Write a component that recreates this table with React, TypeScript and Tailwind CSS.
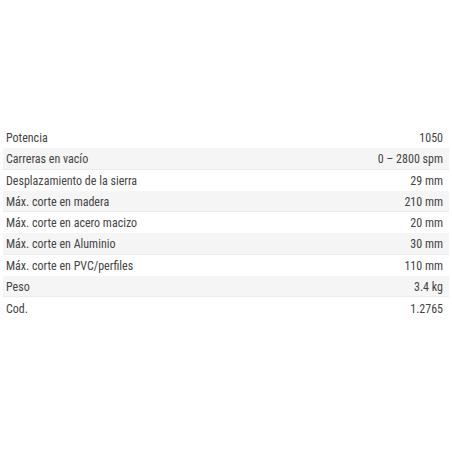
const specs: [string, string][] = [
  ["Potencia", "1050"],
  ["Carreras en vacío", "0 – 2800 spm"],
  ["Desplazamiento de la sierra", "29 mm"],
  ["Máx. corte en madera", "210 mm"],
  ["Máx. corte en acero macizo", "20 mm"],
  ["Máx. corte en Aluminio", "30 mm"],
  ["Máx. corte en PVC/perfiles", "110 mm"],
  ["Peso", "3.4 kg"],
  ["Cod.", "1.2765"],
];

export default function App() {
  return (
    <div className="h-[452px] w-[452px] bg-white px-[3px] pt-[127px] font-['Roboto',sans-serif] text-[12px] text-[#444] [font-stretch:condensed]">
      <div className="flex flex-col">
        {specs.map(([label, value], i) => (
          <div
            key={label}
            className={
              i % 2 === 1
                ? "flex h-[21.3px] items-center justify-between border-b border-[#ececec] bg-[#f5f5f5] pl-[3px] pr-[6px] pt-px"
                : "flex h-[21.3px] items-center justify-between pl-[3px] pr-[6px] pt-px"
            }
          >
            <span>{label}</span>
            <span>{value}</span>
          </div>
        ))}
      </div>
    </div>
  );
}
